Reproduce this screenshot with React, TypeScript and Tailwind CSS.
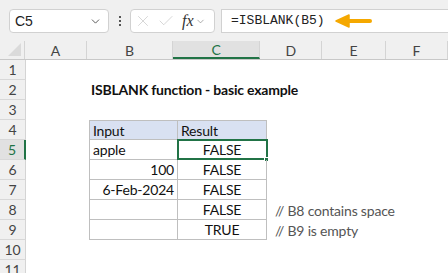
import { ChevronDown, X, Check } from "lucide-react";

const cols = [
    { name: "A", w: "w-[63px]" },
    { name: "B", w: "w-[89px]" },
    { name: "C", w: "w-[89px]" },
    { name: "D", w: "w-[64px]" },
    { name: "E", w: "w-[65px]" },
    { name: "F", w: "w-[64px]" },
];

type Row = { n: number; b?: string; bAlign?: string; c?: string; note?: string; title?: boolean; head?: boolean; table?: boolean };

const rows: Row[] = [
    { n: 1 },
    { n: 2, title: true },
    { n: 3 },
    { n: 4, head: true, table: true, b: "Input", c: "Result" },
    { n: 5, table: true, b: "apple", bAlign: "text-left", c: "FALSE" },
    { n: 6, table: true, b: "100", bAlign: "text-right", c: "FALSE" },
    { n: 7, table: true, b: "6-Feb-2024", bAlign: "text-right", c: "FALSE" },
    { n: 8, table: true, c: "FALSE", note: "// B8 contains space" },
    { n: 9, table: true, c: "TRUE", note: "// B9 is empty" },
    { n: 10 },
    { n: 11 },
];

function Toolbar() {
    return (
        <div className="h-[41px] bg-[#f0f0f0] flex items-center pt-[1px] pl-[9px]">
            <div className="w-[100px] h-[24px] bg-white border border-[#d1d1d1] rounded-[4px] flex items-center justify-between pl-[5px] pr-[6px]">
                <span className="text-[14px] text-[#222] font-['Liberation_Sans',sans-serif]">C5</span>
                <ChevronDown size={13} strokeWidth={1.6} className="text-[#444]" />
            </div>
            <div className="w-[21px] flex flex-col items-center gap-[2px]">
                <span className="w-[2px] h-[2px] bg-[#555]" />
                <span className="w-[2px] h-[2px] bg-[#555]" />
                <span className="w-[2px] h-[2px] bg-[#555]" />
            </div>
            <div className="w-[85px] h-[24px] bg-white border border-[#d1d1d1] rounded-[4px] flex items-center pl-[3px] gap-[5px]">
                <X size={18} strokeWidth={0.9} className="text-[#c4c4c4]" />
                <Check size={18} strokeWidth={0.9} className="text-[#c4c4c4]" />
                <span className="flex items-center gap-[1px] ml-[2px]">
                    <span className="text-[16px] italic text-[#333] font-['Liberation_Serif',serif] leading-none">fx</span>
                    <ChevronDown size={11} strokeWidth={1.5} className="text-[#888]" />
                </span>
            </div>
            <div className="flex-1 h-[24px] ml-[6px] bg-white border-y border-l border-[#d1d1d1] flex items-center pl-[9px]">
                <span className="text-[13px] text-[#222] font-['Liberation_Mono',monospace]">=ISBLANK(B5)</span>
                <svg width="38" height="14" viewBox="0 0 38 14" className="ml-[10px]">
                    <path d="M13 7 H35" stroke="#f5a800" strokeWidth="4" strokeLinecap="round" />
                    <path d="M1 7 L14 1 L14 13 Z" fill="#f5a800" stroke="#f5a800" strokeWidth="1.5" strokeLinejoin="round" />
                </svg>
            </div>
        </div>
    );
}

function HeaderRow() {
    return (
        <div className="flex h-[19px] bg-[#f0f0f0] border-b border-[#c8c8c8] text-[14px] text-[#444]">
            <div className="w-[26px] h-full border-r border-[#d4d4d4] relative">
                <div className="absolute right-[3px] bottom-[3px] w-0 h-0 border-l-[13px] border-l-transparent border-b-[13px] border-b-[#dadada]" />
            </div>
            {cols.map((c) => (
                <div
                    key={c.name}
                    className={`${c.w} h-full flex items-center justify-center border-r border-[#d4d4d4] ${
                        c.name === "C" ? "bg-[#e1e1e1] border-b-2 border-b-[#217346] text-[#217346]" : ""
                    }`}
                >
                    {c.name}
                </div>
            ))}
        </div>
    );
}

function SheetRow({ r }: { r: Row }) {
    const sel = r.n === 5;
    const tb = r.table ? "border-r border-b border-[#bfbfbf]" : "";
    const fill = r.head ? "bg-[#d9e1f2]" : "";
    return (
        <div className="flex h-[20px] text-[14px] tracking-[-0.2px] text-[#111]">
            <div
                className={`w-[26px] h-full flex items-center justify-center text-[14px] tracking-normal border-b border-[#d8d8d8] ${
                    sel ? "bg-[#e1e1e1] border-r-2 border-r-[#217346] text-[#217346]" : "bg-[#f0f0f0] border-r border-r-[#d4d4d4] text-[#444]"
                }`}
            >
                {r.n}
            </div>
            <div className="w-[63px] h-full relative">
                {r.title && (
                    <span className="absolute left-[65px] top-0 whitespace-nowrap font-bold text-[14px] leading-[20px]">
                        ISBLANK function - basic example
                    </span>
                )}
            </div>
            <div
                className={`w-[89px] h-full flex items-center px-[3px] ${tb} ${fill} ${r.table ? "border-l" : ""} ${
                    r.head || r.bAlign === "text-left" ? "justify-start" : "justify-end"
                } ${r.n === 4 ? "border-t" : ""}`}
            >
                {r.b}
            </div>
            <div
                className={`w-[89px] h-full flex items-center relative ${tb} ${fill} ${r.n === 4 ? "border-t" : ""} ${
                    r.head ? "justify-start px-[3px]" : "justify-center"
                }`}
            >
                {r.c}
                {sel && (
                    <>
                        <div className="absolute -left-[1px] -top-[1px] w-[91px] h-[21px] border-2 border-[#217346]" />
                        <div className="absolute -right-[3px] -bottom-[3px] w-[5px] h-[5px] bg-[#217346] border border-white" />
                    </>
                )}
            </div>
            <div className="flex-1 h-full flex items-center pl-[8px] text-[#555] whitespace-nowrap">{r.note}</div>
        </div>
    );
}

export default function App() {
    return (
        <div className="w-[448px] h-[273px] overflow-hidden bg-white font-['Lato',sans-serif]">
            <Toolbar />
            <HeaderRow />
            {rows.map((r) => (
                <SheetRow key={r.n} r={r} />
            ))}
        </div>
    );
}
